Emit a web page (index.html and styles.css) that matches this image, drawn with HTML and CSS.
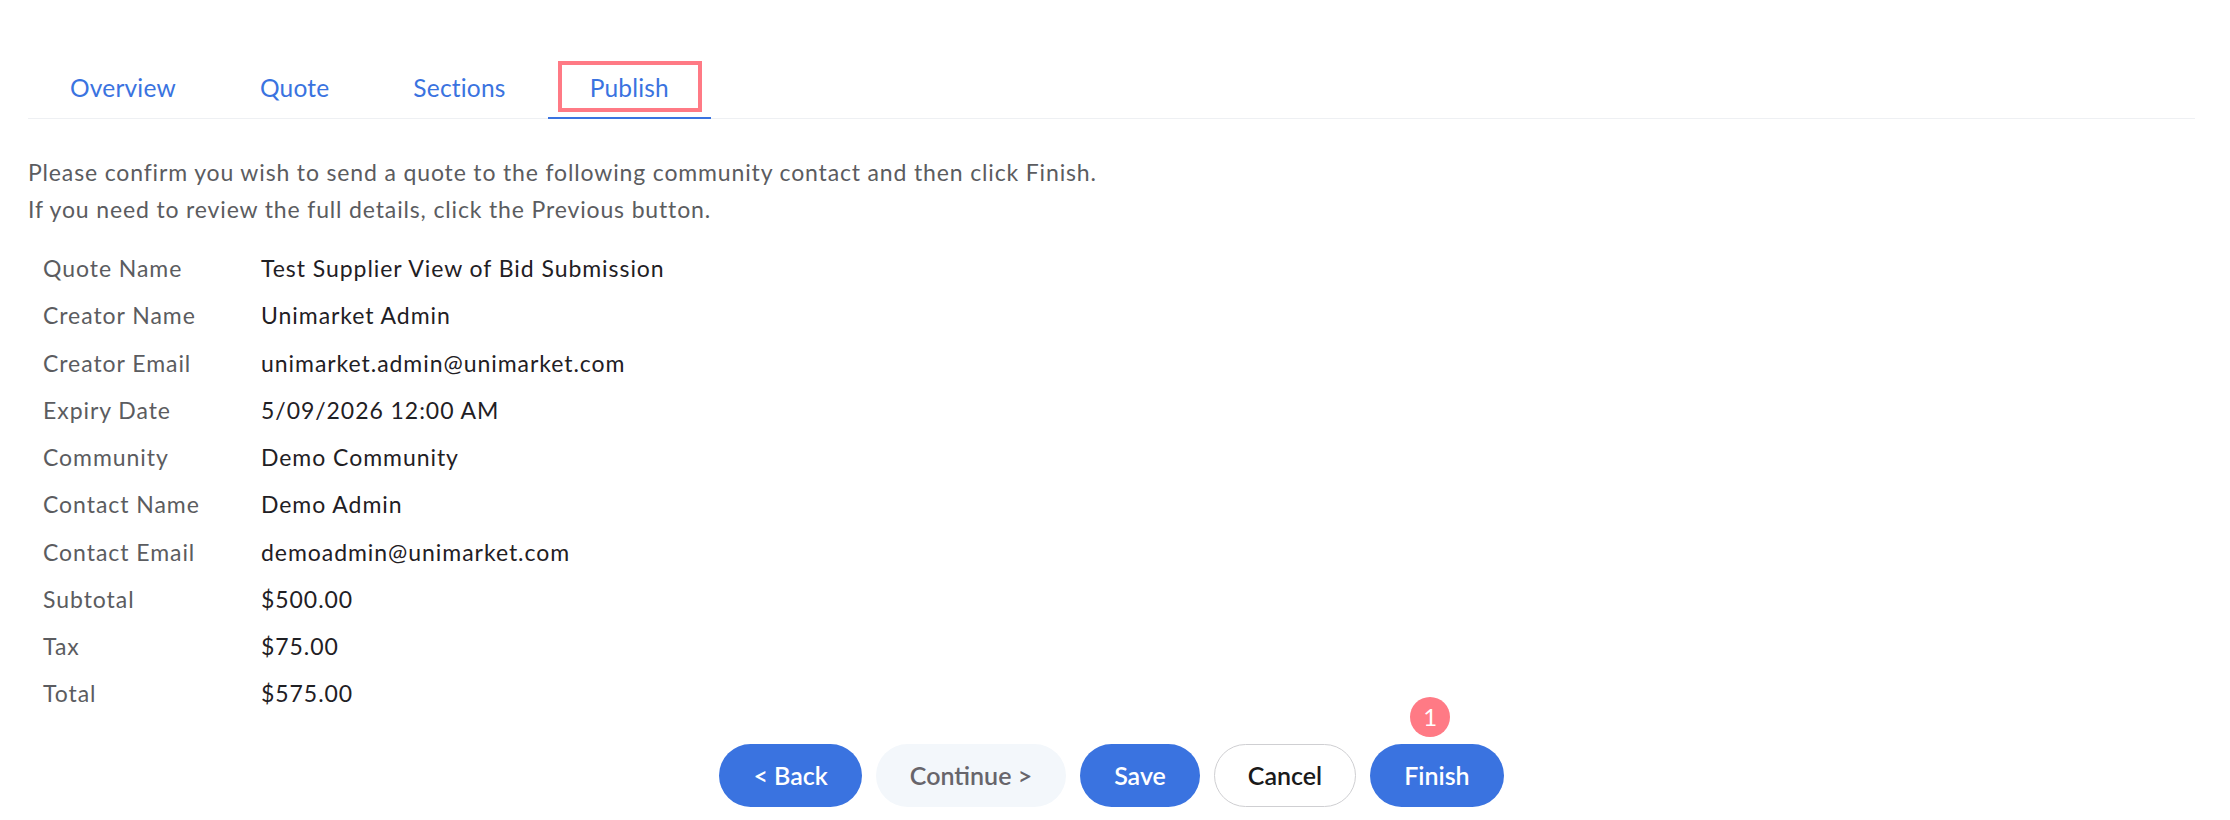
FILE: index.html
```html
<!DOCTYPE html>
<html lang="en">
<head>
  <meta charset="UTF-8" />
  <title>Publish Quote</title>
  <link rel="stylesheet" href="styles.css">
</head>
<body>
  <div class="page">
    <nav class="tabs">
      <a class="tab">Overview</a>
      <a class="tab">Quote</a>
      <a class="tab">Sections</a>
      <a class="tab active">Publish<span class="marker"></span></a>
    </nav>

    <p class="intro">
      Please confirm you wish to send a quote to the following community contact and then click Finish.<br />
      If you need to review the full details, click the Previous button.
    </p>

    <div class="details">
      <div class="row"><span class="label">Quote Name</span><span class="value">Test Supplier View of Bid Submission</span></div>
      <div class="row"><span class="label">Creator Name</span><span class="value">Unimarket Admin</span></div>
      <div class="row"><span class="label">Creator Email</span><span class="value">unimarket.admin@unimarket.com</span></div>
      <div class="row"><span class="label">Expiry Date</span><span class="value">5/09/2026 12:00 AM</span></div>
      <div class="row"><span class="label">Community</span><span class="value">Demo Community</span></div>
      <div class="row"><span class="label">Contact Name</span><span class="value">Demo Admin</span></div>
      <div class="row"><span class="label">Contact Email</span><span class="value">demoadmin@unimarket.com</span></div>
      <div class="row"><span class="label">Subtotal</span><span class="value">$500.00</span></div>
      <div class="row"><span class="label">Tax</span><span class="value">$75.00</span></div>
      <div class="row"><span class="label">Total</span><span class="value">$575.00</span></div>
    </div>

    <div class="actions">
      <button class="btn primary">&lt; Back</button>
      <button class="btn muted">Continue &gt;</button>
      <button class="btn primary">Save</button>
      <button class="btn outline">Cancel</button>
      <button class="btn primary finish">Finish<span class="badge">1</span></button>
    </div>
  </div>
</body>
</html>
```

FILE: styles.css
```css
:root {
  --blue: #3a73e0;
  --pink: #ff7a85;
  --text-gray: #5b5c60;
  --text-dark: #1f2024;
  --line: #eef0f3;
}

body {
  margin: 0;
  background: #ffffff;
  font-family: Lato, "Open Sans", sans-serif;
  color: var(--text-dark);
}

.page {
  padding: 58px 35px 0 28px;
}

.tabs {
  display: flex;
  border-bottom: 1px solid var(--line);
}

.tab {
  position: relative;
  padding: 12px 42px 11px;
  line-height: 36px;
  font-size: 24.5px;
  letter-spacing: 0.2px;
  color: var(--blue);
  border-bottom: 2px solid transparent;
  margin-bottom: -1px;
  cursor: pointer;
}

.tab.active {
  border-bottom-color: var(--blue);
}

.marker {
  position: absolute;
  left: 10px;
  top: 3px;
  width: 144px;
  height: 51px;
  box-sizing: border-box;
  border: 4px solid var(--pink);
}

.intro {
  margin: 35px 0 0;
  font-size: 23px;
  letter-spacing: 0.85px;
  line-height: 37px;
  color: var(--text-gray);
}

.details {
  margin-top: 17px;
  padding-left: 15px;
}

.row {
  display: flex;
  font-size: 23px;
  letter-spacing: 0.95px;
  line-height: 47.25px;
}

.label {
  width: 218px;
  color: var(--text-gray);
}

.value {
  color: var(--text-dark);
}

.actions {
  display: flex;
  justify-content: center;
  gap: 14px;
  margin-top: 26px;
}

.btn {
  position: relative;
  height: 63px;
  padding: 0 33px;
  border-radius: 32px;
  border: 1px solid transparent;
  font-family: inherit;
  font-size: 25px;
  font-weight: 600;
  cursor: pointer;
}

.btn.primary {
  background: var(--blue);
  color: #ffffff;
}

.btn.muted {
  background: #f3f7fb;
  color: #67656b;
}

.btn.outline {
  background: #ffffff;
  border-color: #cfcfd2;
  color: #1a1a1a;
}

.badge {
  position: absolute;
  left: 39px;
  top: -48px;
  width: 40px;
  height: 40px;
  border-radius: 50%;
  background: var(--pink);
  color: #ffffff;
  font-size: 24px;
  font-weight: 400;
  line-height: 40px;
  text-align: center;
}
```
